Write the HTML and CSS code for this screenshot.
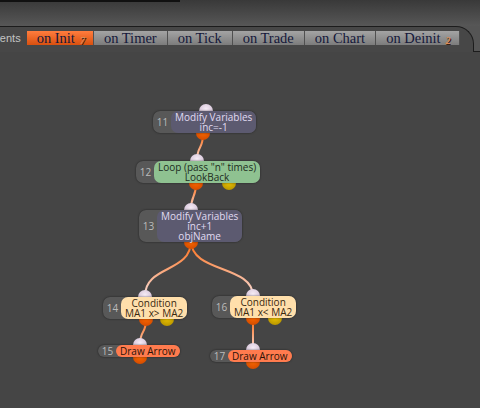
FILE: index.html
```html
<!DOCTYPE html>
<html>
    <head>
        <meta charset="UTF-8">
        <meta name="viewport" content="width=device-width, initial-scale=1.0">
        <title>Events Graph</title>
        <link rel="stylesheet" href="styles.css">
    </head>
    <body>
        <div class="topbar">
            <div class="topbar-line"></div>
        </div>
        <div class="tabrow-wrap">
            <div class="tabrow">
                <span class="events-label">Events</span>
                <div class="tabs">
                    <div class="tab active counted">on Init<sub class="tab-count">7</sub></div>
                    <div class="tab">on Timer</div>
                    <div class="tab">on Tick</div>
                    <div class="tab">on Trade</div>
                    <div class="tab">on Chart</div>
                    <div class="tab counted">on Deinit<sub class="tab-count">2</sub></div>
                </div>
            </div>
            <div class="tab-corner"></div>
        </div>

        <div class="canvas">
            <!-- links between node ports -->
            <svg class="links" width="480" height="356" viewBox="0 0 480 356">
                <defs>
                    <linearGradient id="g1" gradientUnits="userSpaceOnUse" x1="0" y1="82" x2="0" y2="109">
                        <stop offset="0" stop-color="#ff6a10"/><stop offset="1" stop-color="#f6dcd8"/>
                    </linearGradient>
                    <linearGradient id="g2" gradientUnits="userSpaceOnUse" x1="0" y1="131" x2="0" y2="158">
                        <stop offset="0" stop-color="#ff6a10"/><stop offset="1" stop-color="#f6dcd8"/>
                    </linearGradient>
                    <linearGradient id="g3" gradientUnits="userSpaceOnUse" x1="0" y1="189" x2="0" y2="244">
                        <stop offset="0" stop-color="#ff6a10"/><stop offset="1" stop-color="#f6dcd8"/>
                    </linearGradient>
                    <linearGradient id="g5" gradientUnits="userSpaceOnUse" x1="0" y1="267" x2="0" y2="298">
                        <stop offset="0" stop-color="#ff6a10"/><stop offset="1" stop-color="#f6dcd8"/>
                    </linearGradient>
                </defs>
                <path d="M203 82 C203 98, 197 93, 197 109" stroke="url(#g1)"/>
                <path d="M196 131 C196 147, 191 142, 191 158" stroke="url(#g2)"/>
                <path d="M191 189 C191 221, 145 213, 145 244" stroke="url(#g3)"/>
                <path d="M191 189 C191 221, 253 213, 253 244" stroke="url(#g3)"/>
                <path d="M146 267 C146 283, 140 277, 140 293" stroke="url(#g5)"/>
                <path d="M253 267 L253 298" stroke="url(#g5)"/>
            </svg>

            <div class="node" style="left:153px; top:59px">
                <span class="port in" style="left:46px"></span>
                <span class="port out" style="left:43px"></span>
                <div class="num">11</div>
                <div class="body modify">Modify Variables<br>inc=-1</div>
            </div>

            <div class="node" style="left:136px; top:109px">
                <span class="port in" style="left:54px"></span>
                <span class="port out" style="left:53px"></span>
                <span class="port out alt" style="left:86px"></span>
                <div class="num">12</div>
                <div class="body loop">Loop (pass "n" times)<br>LookBack</div>
            </div>

            <div class="node" style="left:139px; top:158px">
                <span class="port in" style="left:45px"></span>
                <span class="port out" style="left:45px"></span>
                <div class="num">13</div>
                <div class="body modify">Modify Variables<br>inc+1<br>objName</div>
            </div>

            <div class="node" style="left:103px; top:245px">
                <span class="port in" style="left:35px"></span>
                <span class="port out" style="left:36px"></span>
                <span class="port out alt" style="left:57px"></span>
                <div class="num">14</div>
                <div class="body condition">Condition<br>MA1 x&gt; MA2</div>
            </div>

            <div class="node" style="left:98px; top:293px">
                <span class="port in" style="left:35px"></span>
                <span class="port out" style="left:35px"></span>
                <div class="num">15</div>
                <div class="body arrow">Draw Arrow</div>
            </div>

            <div class="node" style="left:212px; top:244px">
                <span class="port in" style="left:34px"></span>
                <span class="port out" style="left:34px"></span>
                <span class="port out alt" style="left:56px"></span>
                <div class="num">16</div>
                <div class="body condition">Condition<br>MA1 x&lt; MA2</div>
            </div>

            <div class="node" style="left:210px; top:298px">
                <span class="port in" style="left:36px"></span>
                <span class="port out" style="left:36px"></span>
                <div class="num">17</div>
                <div class="body arrow">Draw Arrow</div>
            </div>
        </div>
    </body>
</html>
```

FILE: styles.css
```css
* {
    margin: 0;
    padding: 0;
    box-sizing: border-box;
}
body {
    background-color: #454545;
    font-family: "Open Sans", "Liberation Sans", sans-serif;
    width: 480px;
    height: 408px;
    overflow: hidden;
}
.topbar {
    height: 26px;
    background: linear-gradient(#393939, #575757);
}
.topbar-line {
    width: 180px;
    height: 2px;
    background-color: #111;
}
.tabrow-wrap {
    display: flex;
    background-color: #555;
}
.tabrow {
    flex: 1;
    height: 26px;
    display: flex;
    align-items: flex-start;
    padding-top: 4px;
    background-color: #474747;
    border-top: 1px solid #1c1c1c;
    border-right: 1px solid #1c1c1c;
    border-top-right-radius: 18px;
    overflow: hidden;
}
.tab-corner {
    width: 6px;
    height: 26px;
    border-bottom: 1px solid #1c1c1c;
}
.events-label {
    margin-left: -13px;
    margin-right: 6px;
    color: #c4c4c4;
    font-family: "Liberation Sans", sans-serif;
    font-size: 11px;
    line-height: 14px;
}
.tabs {
    display: flex;
}
.tab {
    position: relative;
    height: 14px;
    padding: 0 10px;
    border-right: 1px solid #505050;
    background: linear-gradient(#a4a4a4, #7c7c7c);
    color: #14183a;
    font-family: "Liberation Serif", "Times New Roman", serif;
    font-size: 14.5px;
    line-height: 14px;
    white-space: nowrap;
}
.tab.counted {
    padding-right: 18px;
}
.tab.active {
    background: linear-gradient(#ff7d3e, #d9500f);
}
.tab-count {
    position: absolute;
    right: 8px;
    bottom: -3px;
    font-size: 10px;
    font-style: italic;
    font-weight: bold;
    color: #d98a55;
    text-shadow: 1px 1px 0 #3a2010;
}
.canvas {
    position: relative;
    z-index: 0;
    height: 356px;
}
.links {
    position: absolute;
    left: 0;
    top: 0;
    z-index: -2;
}
.links path {
    fill: none;
    stroke-width: 2;
}
.node {
    position: absolute;
    display: flex;
    border-radius: 7px;
    background-color: #585858;
    box-shadow: 0 0 2px rgba(0, 0, 0, 0.6);
    font-size: 10px;
    line-height: 10px;
}
.num {
    width: 18px;
    display: flex;
    align-items: center;
    justify-content: center;
    color: #bcbcbc;
    padding-left: 1px;
}
.body {
    padding: 1px 4px;
    border-radius: 7px;
    text-align: center;
    white-space: nowrap;
}
.modify {
    background-color: #5c5a70;
    color: #e0daf2;
}
.loop {
    background-color: #8fc291;
    color: #1d2c1d;
}
.condition {
    background-color: #ffdfab;
    color: #3a2810;
}
.arrow {
    background-color: #ff7b4e;
    color: #2c1208;
}
.port {
    position: absolute;
    z-index: -1;
    width: 14px;
    height: 14px;
    border-radius: 50%;
}
.port.in {
    top: -7px;
    background: radial-gradient(circle at 50% 35%, #f6ecf6, #c4aec8);
}
.port.out {
    bottom: -7px;
    background: radial-gradient(circle at 50% 40%, #ff6a00, #c84400);
}
.port.out.alt {
    background: radial-gradient(circle at 50% 40%, #f2c800, #a88800);
}
```
